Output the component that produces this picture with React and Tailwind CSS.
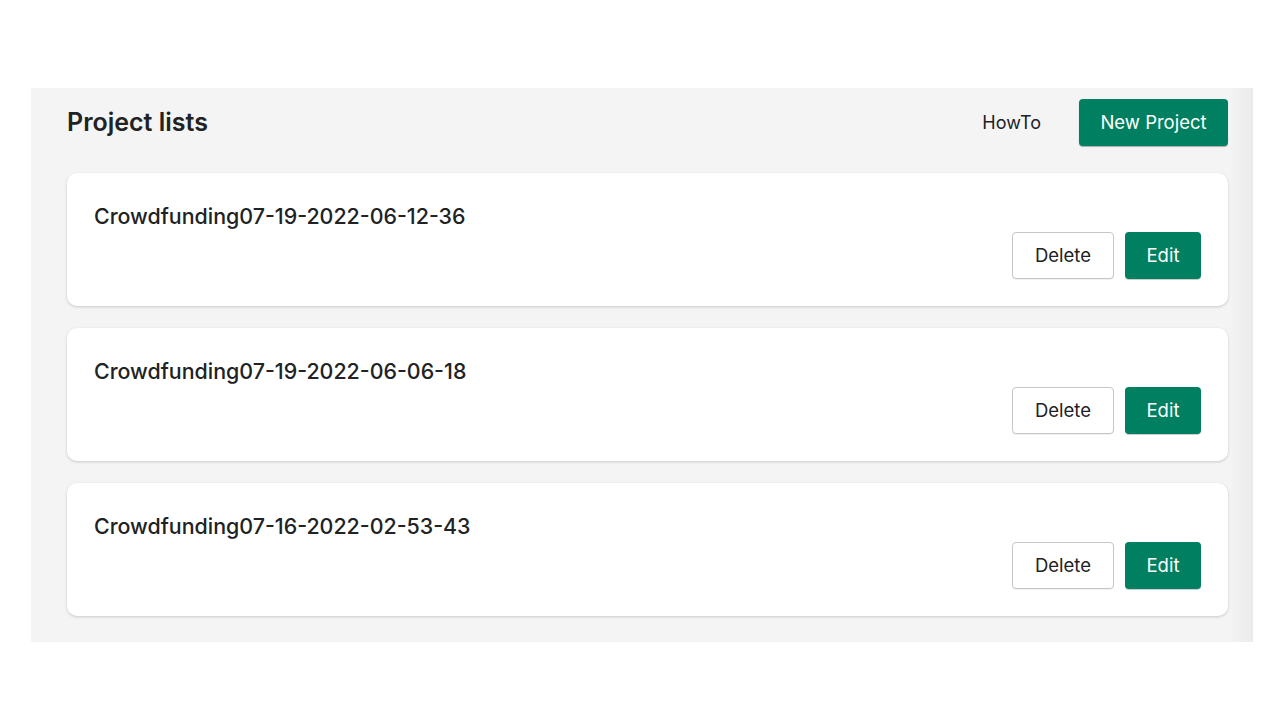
const projects = [
  "Crowdfunding07-19-2022-06-12-36",
  "Crowdfunding07-19-2022-06-06-18",
  "Crowdfunding07-16-2022-02-53-43",
];

function ProjectCard({ name }) {
  return (
    <div className="bg-white rounded-[10px] shadow-[0_1px_3px_rgba(0,0,0,0.18)] p-[27px]">
      <h2 className="text-[21.4px] leading-[32px] font-medium text-[#202223]">{name}</h2>
      <div className="flex justify-end gap-[11px]">
        <button className="h-[47px] w-[102px] bg-white border border-[#c4c6c9] rounded-[4px] text-[18.5px] text-[#202223] shadow-[0_1px_0_rgba(0,0,0,0.05)]">
          Delete
        </button>
        <button className="h-[47px] w-[76px] bg-[#008060] rounded-[4px] text-[18.5px] text-white shadow-[0_1px_0_rgba(0,0,0,0.2)]">
          Edit
        </button>
      </div>
    </div>
  );
}

export default function App() {
  return (
    <div className="min-h-[720px] bg-white pt-[88px] pl-[31px] font-['Inter','Liberation_Sans',sans-serif]">
      <div className="relative w-[1222px] bg-[#f4f4f4] pl-[36px] pr-[25px] pt-[11px] pb-[26px]">
        <div className="absolute top-0 right-0 h-full w-[24px] bg-gradient-to-r from-[#f4f4f4] to-[#ebebeb]" />
        <div className="relative flex items-center justify-between h-[47px]">
          <h1 className="text-[25px] font-semibold text-[#202223]">Project lists</h1>
          <div className="flex items-center gap-[38px]">
            <button className="text-[18px] text-[#202223]">HowTo</button>
            <button className="h-[47px] w-[149px] bg-[#008060] rounded-[4px] text-[18.5px] text-white shadow-[0_1px_1px_rgba(0,0,0,0.3)]">
              New Project
            </button>
          </div>
        </div>
        <div className="relative mt-[27px] flex flex-col gap-[22px]">
          {projects.map((p) => (
            <ProjectCard key={p} name={p} />
          ))}
        </div>
      </div>
    </div>
  );
}
